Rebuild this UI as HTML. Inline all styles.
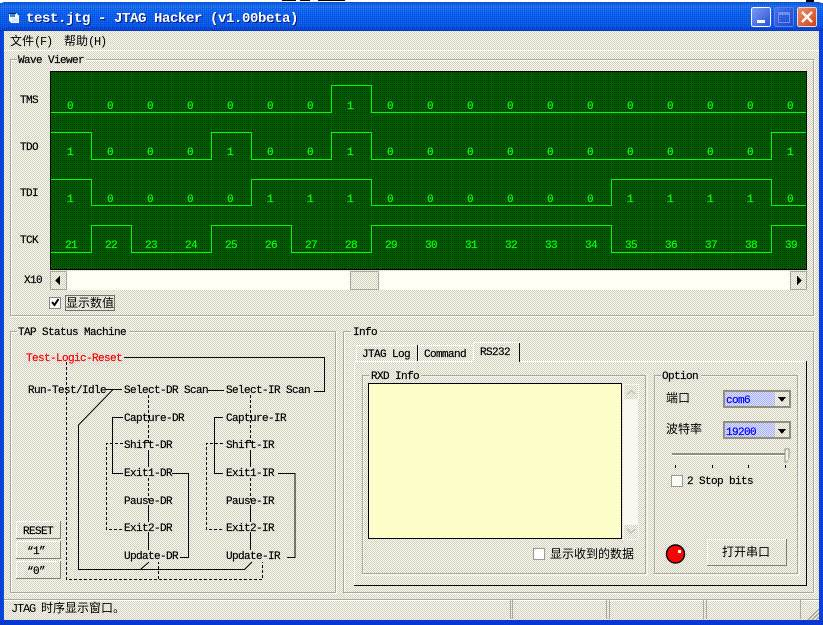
<!DOCTYPE html>
<html><head><meta charset="utf-8"><title>test.jtg - JTAG Hacker</title>
<style>
html,body{margin:0;padding:0;background:#fff;overflow:hidden}
svg{display:block}
text{font-family:"Liberation Mono",monospace;font-size:11px;letter-spacing:-.6px;fill:#000;stroke:#000;stroke-width:.2px;white-space:pre}
.cjk{font-family:"Liberation Mono","WenQuanYi Zen Hei","Noto Sans CJK SC",monospace;font-size:12px;letter-spacing:0;stroke-width:0}
.cjk .l{letter-spacing:-1.2px}
.v text{fill:#0f0;stroke:#0f0;text-anchor:middle}
.g{fill:none;stroke:#aca899}
.gw{fill:none;stroke:#fff}
.s{fill:none;stroke:#000}
.d{fill:none;stroke:#000;stroke-dasharray:3 2}
.w{fill:none;stroke:#0f0}
</style></head><body>
<svg width="823" height="625" viewBox="0 0 823 625" xmlns="http://www.w3.org/2000/svg" shape-rendering="crispEdges">
<defs>
<pattern id="bg" width="2" height="2" patternUnits="userSpaceOnUse"><rect width="2" height="2" fill="#fdfbf0"/><rect width="1" height="1" fill="#d2d0c0"/><rect x="1" y="1" width="1" height="1" fill="#d2d0c0"/></pattern>
<pattern id="gr" width="2" height="2" patternUnits="userSpaceOnUse"><rect width="2" height="2" fill="#005a00"/><rect width="1" height="1" fill="#003a00"/></pattern>
<pattern id="ye" width="2" height="2" patternUnits="userSpaceOnUse"><rect width="2" height="2" fill="#ffffb4"/><rect width="1" height="1" fill="#ffffe0"/><rect x="1" y="1" width="1" height="1" fill="#ffffe0"/></pattern>
<pattern id="bl" width="2" height="2" patternUnits="userSpaceOnUse"><rect width="2" height="2" fill="#dde0ff"/><rect width="1" height="1" fill="#a8b0ff"/><rect x="1" y="1" width="1" height="1" fill="#a8b0ff"/></pattern>
<pattern id="td" width="2" height="2" patternUnits="userSpaceOnUse"><rect width="1" height="1" fill="#001880" fill-opacity=".22"/><rect x="1" y="1" width="1" height="1" fill="#80b0ff" fill-opacity=".12"/></pattern>
<linearGradient id="tb" x1="0" y1="0" x2="0" y2="1"><stop offset="0" stop-color="#0a5ad8"/><stop offset=".12" stop-color="#1c70f0"/><stop offset=".35" stop-color="#0a60f0"/><stop offset=".8" stop-color="#0558e8"/><stop offset="1" stop-color="#0038c8"/></linearGradient>
<linearGradient id="mn" x1="0" y1="0" x2="1" y2="1"><stop offset="0" stop-color="#7e9cf0"/><stop offset="1" stop-color="#2a50d8"/></linearGradient>
<linearGradient id="mx" x1="0" y1="0" x2="1" y2="1"><stop offset="0" stop-color="#4a70e8"/><stop offset="1" stop-color="#1c48d0"/></linearGradient>
<linearGradient id="cl" x1="0" y1="0" x2="1" y2="1"><stop offset="0" stop-color="#f09070"/><stop offset="1" stop-color="#d04010"/></linearGradient>
</defs>

<!-- window frame -->
<path d="M0 625V6Q0 2 6 2H817Q823 2 823 6V625Z" fill="#0a50e0"/>
<rect x="0" y="3" width="823" height="28" fill="url(#tb)"/>
<rect x="0" y="3" width="823" height="28" fill="url(#td)"/>
<rect x="0" y="31" width="3" height="594" fill="#0840d8"/>
<rect x="819" y="31" width="4" height="594" fill="#0840d8"/>
<rect x="0" y="620" width="823" height="5" fill="#0838d0"/>
<rect x="4" y="31" width="815" height="589" fill="url(#bg)"/>
<rect x="4" y="50" width="815" height="1" fill="#fff"/>
<path d="M282 0h14v1h-14zM300 0h10v1h-10zM318 0h27v1h-27zM806 0h8v2h-8z" fill="#000"/>

<!-- title -->
<path d="M9 13h7l3 3v7h-8l-2-2z" fill="#fff"/><path d="M10 14h5v3h-5z" fill="#3888d8"/><path d="M12 18h6v4h-6z" fill="#d8e8f8"/><path d="M9 13.5h7" stroke="#102050" fill="none"/><path d="M19 21h2v1h-2z" fill="#806040"/>
<text x="26" y="22" style="font-size:14px;font-weight:bold;letter-spacing:-.4px;fill:#001880;stroke:none" transform="translate(1 1)">test.jtg - JTAG Hacker (v1.00beta)</text>
<text x="26" y="22" style="font-size:14px;font-weight:bold;letter-spacing:-.4px;fill:#fff;stroke:none">test.jtg - JTAG Hacker (v1.00beta)</text>
<!-- title buttons -->
<rect x="751.500" y="7.500" width="19" height="19" rx="2" fill="url(#mn)" stroke="#fff"/><rect x="757" y="20" width="8" height="3" fill="#fff"/>
<rect x="774.500" y="7.500" width="19" height="19" rx="2" fill="url(#mx)" stroke="#5c80e8"/><rect x="778.500" y="12.500" width="11" height="10" fill="none" stroke="#6c90f0"/><rect x="779" y="13" width="10" height="2" fill="#6c90f0"/>
<rect x="797.500" y="7.500" width="19" height="19" rx="2" fill="url(#cl)" stroke="#f0d8c8"/><path d="M802 12l10 10M812 12l-10 10" stroke="#fff" stroke-width="2.400" shape-rendering="auto"/>

<!-- menu -->
<text class="cjk" x="10" y="45">文件<tspan class="l">(F)</tspan></text>
<text class="cjk" x="64" y="45">帮助<tspan class="l">(H)</tspan></text>

<!-- Wave Viewer group -->
<rect class="gw" x="11.500" y="60.500" width="803" height="256"/>
<rect class="g" x="10.500" y="59.500" width="803" height="256"/>
<rect x="17" y="54" width="69" height="10" fill="url(#bg)"/>
<text x="18" y="63">Wave Viewer</text>
<text x="20" y="103">TMS</text>
<text x="20" y="150">TDO</text>
<text x="20" y="196">TDI</text>
<text x="20" y="243">TCK</text>
<text x="24" y="283">X10</text>

<!-- plot -->
<rect x="50" y="71" width="757" height="199" fill="url(#gr)"/>
<path d="M50.500 71V270M50 71.500H807M806.500 71V270M50 269.500H807" stroke="#000" fill="none"/>
<path d="M91.500 72V269M131.500 72V269M171.500 72V269M211.500 72V269M251.500 72V269M291.500 72V269M331.500 72V269M371.500 72V269M411.500 72V269M451.500 72V269M491.500 72V269M531.500 72V269M571.500 72V269M611.500 72V269M651.500 72V269M691.500 72V269M731.500 72V269M771.500 72V269" stroke="#0a600a" fill="none"/>
<path class="w" d="M51 112.500H331.500V85.500H371.500V112.500H806"/>
<path class="w" d="M51 132.500H91.500V159.500H211.500V132.500H251.500V159.500H331.500V132.500H371.500V159.500H771.500V132.500H806"/>
<path class="w" d="M51 179.500H91.500V205.500H251.500V179.500H371.500V205.500H611.500V179.500H771.500V205.500H806"/>
<path class="w" d="M51 252.500H91.500V225.500H131.500V252.500H211.500V225.500H291.500V252.500H371.500V225.500H611.500V252.500H771.500V225.500H806"/>
<g class="v">
<text x="70" y="109">0</text><text x="110" y="109">0</text><text x="150" y="109">0</text><text x="190" y="109">0</text><text x="230" y="109">0</text><text x="270" y="109">0</text><text x="310" y="109">0</text><text x="350" y="109">1</text><text x="390" y="109">0</text><text x="430" y="109">0</text><text x="470" y="109">0</text><text x="510" y="109">0</text><text x="550" y="109">0</text><text x="590" y="109">0</text><text x="630" y="109">0</text><text x="670" y="109">0</text><text x="710" y="109">0</text><text x="750" y="109">0</text><text x="790" y="109">0</text>
<text x="70" y="155">1</text><text x="110" y="155">0</text><text x="150" y="155">0</text><text x="190" y="155">0</text><text x="230" y="155">1</text><text x="270" y="155">0</text><text x="310" y="155">0</text><text x="350" y="155">1</text><text x="390" y="155">0</text><text x="430" y="155">0</text><text x="470" y="155">0</text><text x="510" y="155">0</text><text x="550" y="155">0</text><text x="590" y="155">0</text><text x="630" y="155">0</text><text x="670" y="155">0</text><text x="710" y="155">0</text><text x="750" y="155">0</text><text x="790" y="155">1</text>
<text x="70" y="202">1</text><text x="110" y="202">0</text><text x="150" y="202">0</text><text x="190" y="202">0</text><text x="230" y="202">0</text><text x="270" y="202">1</text><text x="310" y="202">1</text><text x="350" y="202">1</text><text x="390" y="202">0</text><text x="430" y="202">0</text><text x="470" y="202">0</text><text x="510" y="202">0</text><text x="550" y="202">0</text><text x="590" y="202">0</text><text x="630" y="202">1</text><text x="670" y="202">1</text><text x="710" y="202">1</text><text x="750" y="202">1</text><text x="790" y="202">0</text>
<text x="71" y="248">21</text><text x="111" y="248">22</text><text x="151" y="248">23</text><text x="191" y="248">24</text><text x="231" y="248">25</text><text x="271" y="248">26</text><text x="311" y="248">27</text><text x="351" y="248">28</text><text x="391" y="248">29</text><text x="431" y="248">30</text><text x="471" y="248">31</text><text x="511" y="248">32</text><text x="551" y="248">33</text><text x="591" y="248">34</text><text x="631" y="248">35</text><text x="671" y="248">36</text><text x="711" y="248">37</text><text x="751" y="248">38</text><text x="791" y="248">39</text>
</g>

<!-- h scrollbar -->
<rect x="50" y="271" width="756" height="19" fill="#fffff6"/>
<rect x="50.500" y="271.500" width="16" height="18" fill="url(#bg)" stroke="#aca899"/>
<path d="M55 280.500l5-4.500v9z" fill="#000"/>
<rect x="350.500" y="271.500" width="28" height="18" fill="url(#bg)" stroke="#aca899"/>
<rect x="790.500" y="271.500" width="16" height="18" fill="url(#bg)" stroke="#aca899"/>
<path d="M802 280.500l-5-4.500v9z" fill="#000"/>

<!-- show values -->
<rect x="49.500" y="297.500" width="11" height="11" fill="#fff" stroke="#888"/>
<path d="M52 302l2.500 3 4-6" stroke="#000" stroke-width="2" fill="none" shape-rendering="auto"/>
<rect x="65.500" y="295.500" width="49" height="15" fill="none" stroke="#000" stroke-dasharray="1 1"/>
<text class="cjk" x="66" y="307">显示数值</text>

<!-- TAP group -->
<rect class="gw" x="11.500" y="332.500" width="325" height="261"/>
<rect class="g" x="10.500" y="331.500" width="325" height="261"/>
<rect x="17" y="326" width="112" height="10" fill="url(#bg)"/>
<text x="18" y="335">TAP Status Machine</text>

<g>
<path class="s" d="M124 357.500H324.500V391.500H314M106 389.500H122M208 390.500H224M123 417.500H112.500V473.500H123M223 417.500H214.500V473.500H223M172 473.500H188.500V557.500H180M278 473.500H295V557.500H287M78.500 425V569.500H244.500"/>
<path class="s" d="M113 389.500L78.500 425M244.500 569.500L252 562M140.500 569.500L149 562" shape-rendering="auto"/>
<path class="s" d="M148.500 450V467M148.500 505V522M148.500 532V550M250.500 450V467M250.500 505V522M250.500 532V550"/>
<path class="d" d="M66.500 362V579.500H262.500V562M158.500 579V562M123 443.500H106.500V529.500H122M223 443.500H206.500V529.500H223M148.500 395V445M148.500 478V500M250.500 395V445M250.500 478V500"/>
</g>

<text x="26" y="361" style="fill:#f00;stroke:#f00">Test-Logic-Reset</text>
<text x="28" y="393">Run-Test/Idle</text>
<text x="124" y="393">Select-DR Scan</text>
<text x="226" y="393">Select-IR Scan</text>
<text x="124" y="421">Capture-DR</text>
<text x="226" y="421">Capture-IR</text>
<text x="124" y="448">Shift-DR</text>
<text x="226" y="448">Shift-IR</text>
<text x="124" y="476">Exit1-DR</text>
<text x="226" y="476">Exit1-IR</text>
<text x="124" y="504">Pause-DR</text>
<text x="226" y="504">Pause-IR</text>
<text x="124" y="531">Exit2-DR</text>
<text x="226" y="531">Exit2-IR</text>
<text x="124" y="559">Update-DR</text>
<text x="226" y="559">Update-IR</text>

<!-- reset buttons -->
<g>
<rect x="16" y="521" width="45" height="18" fill="url(#bg)"/><path d="M16.500 539V521.500H61" stroke="#fff" fill="none"/><path d="M16 538.500H60.500V521" stroke="#808070" fill="none"/>
<rect x="16" y="541" width="45" height="18" fill="url(#bg)"/><path d="M16.500 559V541.500H61" stroke="#fff" fill="none"/><path d="M16 558.500H60.500V541" stroke="#808070" fill="none"/>
<rect x="16" y="561" width="45" height="18" fill="url(#bg)"/><path d="M16.500 579V561.500H61" stroke="#fff" fill="none"/><path d="M16 578.500H60.500V561" stroke="#808070" fill="none"/>
</g>
<text x="23" y="534">RESET</text>
<text x="27" y="554">“1”</text>
<text x="27" y="574">“0”</text>

<!-- Info group -->
<rect class="gw" x="344.500" y="332.500" width="470" height="261"/>
<rect class="g" x="343.500" y="331.500" width="470" height="261"/>
<rect x="351" y="326" width="29" height="10" fill="url(#bg)"/>
<text x="353" y="335">Info</text>

<!-- tab page -->
<path d="M354.500 585V361.500H473M519 361.500H806" stroke="#fff" fill="none"/>
<path d="M354 585.500H806.500V361" stroke="#000" fill="none"/>
<path d="M356.500 362V345.500H417M418.500 362V345.500H473M473.500 362V342.500H519" stroke="#fff" fill="none"/>
<path d="M417.500 345V361M519.500 343V362" stroke="#000" fill="none"/>
<text x="362" y="357">JTAG Log</text>
<text x="424" y="357">Command</text>
<text x="480" y="355">RS232</text>

<!-- RXD group -->
<rect class="gw" x="363" y="376" width="284" height="199"/>
<rect class="g" x="362.500" y="375.500" width="283" height="198"/>
<rect x="369" y="370" width="52" height="10" fill="url(#bg)"/>
<text x="371" y="379">RXD Info</text>
<rect x="368.500" y="383.500" width="253" height="155" fill="url(#ye)" stroke="#000"/>
<rect x="623" y="384" width="15" height="155" fill="#f8f8f0"/>
<rect x="623.500" y="384.500" width="15" height="15" fill="url(#bg)" stroke="#f4f4ec"/>
<path d="M627 394.500l4-4 4 4" stroke="#c8c8c0" stroke-width="2" fill="none"/>
<rect x="623.500" y="524.500" width="15" height="15" fill="url(#bg)" stroke="#f4f4ec"/>
<path d="M627 529l4 4 4-4" stroke="#c8c8c0" stroke-width="2" fill="none"/>
<rect x="533.500" y="548.500" width="11" height="11" fill="#fff" stroke="#999"/>
<text class="cjk" x="550" y="558">显示收到的数据</text>

<!-- Option group -->
<rect class="gw" x="655" y="376" width="144" height="199"/>
<rect class="g" x="654.500" y="375.500" width="143" height="198"/>
<rect x="661" y="370" width="40" height="10" fill="url(#bg)"/>
<text x="662" y="379">Option</text>
<text class="cjk" x="666" y="402">端口</text>
<text class="cjk" x="666" y="433">波特率</text>

<rect x="723" y="390" width="68" height="18" fill="#908f80"/><rect x="725" y="392" width="64" height="14" fill="url(#bg)"/>
<rect x="725" y="392" width="50" height="14" fill="url(#bl)"/>
<path d="M778 397h8l-4 5z" fill="#000"/>
<text x="726" y="403" style="fill:#00f;stroke:#00f">com6</text>
<rect x="723" y="421" width="68" height="18" fill="#908f80"/><rect x="725" y="423" width="64" height="14" fill="url(#bg)"/>
<rect x="725" y="423" width="50" height="14" fill="url(#bl)"/>
<path d="M778 429h8l-4 5z" fill="#000"/>
<text x="726" y="435" style="fill:#00f;stroke:#00f">19200</text>

<!-- slider -->
<rect x="672" y="453" width="116" height="2" fill="#908f80"/><rect x="672" y="455" width="116" height="1" fill="#fff"/>
<path d="M785 449h4v9l-2 4h-2z" fill="#f4f1e4" stroke="#908f80" stroke-width=".6"/>
<path d="M675.500 465v3M712.500 465v3M748.500 465v3M785.500 465v3" stroke="#000" fill="none"/>
<rect x="671.500" y="475.500" width="11" height="11" fill="#fbfbf6" stroke="#999"/>
<text x="687" y="484">2 Stop bits</text>

<!-- LED -->
<circle cx="675.500" cy="554" r="9" fill="#f00" stroke="#000" stroke-width="1.400" shape-rendering="auto"/>
<rect x="678" y="550" width="3" height="3" fill="#fff"/>
<!-- open port button -->
<rect x="707" y="539" width="80" height="27" fill="url(#bg)"/>
<path d="M707.500 566V539.500H787" stroke="#fff" fill="none"/>
<path d="M707 565.500H786.500V539" stroke="#808070" fill="none"/>
<text class="cjk" x="722" y="556">打开串口</text>

<!-- status bar -->
<path d="M4 599.500H819" stroke="#aca899" fill="none"/><path d="M4 600.500H819" stroke="#fff" fill="none"/>
<path d="M510.500 600V619M512.500 600V619M606.500 600V619M609.500 600V619M703.500 600V619M706.500 600V619M800.500 600V619" stroke="#aca899" fill="none"/>
<text class="cjk" x="11" y="612"><tspan class="l">JTAG </tspan>时序显示窗口。</text>
<path d="M808 620L819 609M812 620L819 613M816 620L819 617" stroke="#a09c88" fill="none" shape-rendering="auto"/>
</svg>
</body></html>
